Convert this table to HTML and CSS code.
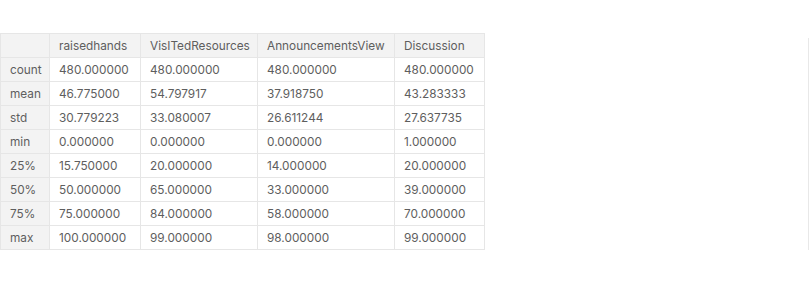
FILE: index.html
```html
<!DOCTYPE html>
<html>
<head>
<meta charset="utf-8">
<link rel="stylesheet" href="styles.css">
</head>
<body>
<div class="page">
  <div class="output">
    <table class="df">
      <colgroup>
        <col class="c-idx"><col class="c-raised"><col class="c-visited"><col class="c-announce"><col class="c-disc">
      </colgroup>
      <thead>
        <tr><th></th><th>raisedhands</th><th>VisITedResources</th><th>AnnouncementsView</th><th>Discussion</th></tr>
      </thead>
      <tbody>
        <tr><th>count</th><td>480.000000</td><td>480.000000</td><td>480.000000</td><td>480.000000</td></tr>
        <tr><th>mean</th><td>46.775000</td><td>54.797917</td><td>37.918750</td><td>43.283333</td></tr>
        <tr><th>std</th><td>30.779223</td><td>33.080007</td><td>26.611244</td><td>27.637735</td></tr>
        <tr><th>min</th><td>0.000000</td><td>0.000000</td><td>0.000000</td><td>1.000000</td></tr>
        <tr><th>25%</th><td>15.750000</td><td>20.000000</td><td>14.000000</td><td>20.000000</td></tr>
        <tr><th>50%</th><td>50.000000</td><td>65.000000</td><td>33.000000</td><td>39.000000</td></tr>
        <tr><th>75%</th><td>75.000000</td><td>84.000000</td><td>58.000000</td><td>70.000000</td></tr>
        <tr><th>max</th><td>100.000000</td><td>99.000000</td><td>98.000000</td><td>99.000000</td></tr>
      </tbody>
    </table>
  </div>
  <div class="scrollbar"></div>
</div>
</body>
</html>
```

FILE: styles.css
```css
html, body {
  margin: 0;
  padding: 0;
  background: #ffffff;
}
.page {
  display: flex;
  justify-content: space-between;
  align-items: flex-start;
  width: 810px;
  height: 298px;
  padding-top: 33px;
  box-sizing: border-box;
}
.output {
  flex: none;
}
.df {
  border-collapse: collapse;
  table-layout: fixed;
  width: 484px;
  font-family: Inter, "Noto Sans", sans-serif;
  font-size: 11.8px;
  color: #5e5e5e;
}
.c-idx { width: 49px; }
.c-raised { width: 91px; }
.c-visited { width: 117px; }
.c-announce { width: 137px; }
.c-disc { width: 90px; }
.df th, .df td {
  height: 23px;
  padding: 0 6px 0 9px;
  border: 1px solid #e6e6e6;
  text-align: left;
  font-weight: 400;
  white-space: nowrap;
  overflow: hidden;
}
.df thead th {
  background: #f3f3f3;
}
.df tbody th {
  background: #f3f3f3;
}
.scrollbar {
  width: 1px;
  height: 212px;
  margin-top: 5px;
  margin-right: 1px;
  background: #e8e8e8;
}
```
